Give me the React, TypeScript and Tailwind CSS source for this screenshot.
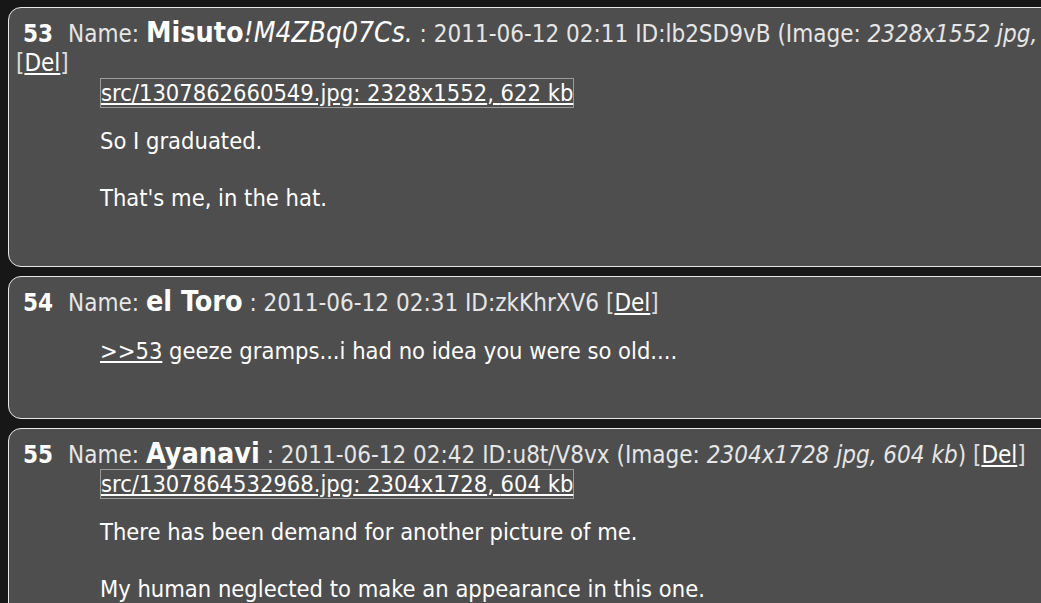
const posts = [
  {
    num: 53,
    name: "Misuto",
    trip: "!M4ZBq07Cs.",
    date: "2011-06-12 02:11",
    id: "lb2SD9vB",
    image: { file: "src/1307862660549.jpg", dims: "2328x1552", size: "622 kb" },
    delOwnLine: true,
    body: ["So I graduated.", "That's me, in the hat."],
  },
  {
    num: 54,
    name: "el Toro",
    date: "2011-06-12 02:31",
    id: "zkKhrXV6",
    quote: ">>53",
    body: ["geeze gramps...i had no idea you were so old...."],
  },
  {
    num: 55,
    name: "Ayanavi",
    date: "2011-06-12 02:42",
    id: "u8t/V8vx",
    image: { file: "src/1307864532968.jpg", dims: "2304x1728", size: "604 kb" },
    body: ["There has been demand for another picture of me.", "My human neglected to make an appearance in this one."],
  },
];

type Post = (typeof posts)[number] & { trip?: string; quote?: string; delOwnLine?: boolean };

const Del = () => (
  <span className="text-[#dcdcdc]">
    [<a href="#" className="text-white underline">Del</a>]
  </span>
);

const PostCard = ({ post }: { post: Post }) => (
  <div className="w-[1160px] shrink-0 rounded-l-[13px] border border-[#e8e8e8] bg-[#4e4e4e] pt-[10px] pr-2 pl-[7px] pb-[53px] text-[23.5px] text-[#e6e6e6]">
    <div className="h-[30px] whitespace-nowrap text-[24px] leading-[30px]">
      <span className="ml-[7px] font-bold text-white">{post.num}</span>
      <span className="ml-[15px]">Name: </span>
      <span className="text-[28.5px] font-bold text-white">{post.name}</span>
      {post.trip && <span className="text-[28px] italic text-white">{post.trip}</span>}
      <span> : {post.date} ID:{post.id}</span>
      {post.image && (
        <span>
          {" "}(Image: <i>{post.image.dims} jpg, {post.image.size}</i>)
        </span>
      )}
      {!post.delOwnLine && (
        <>
          {" "}
          <Del />
        </>
      )}
    </div>
    {post.delOwnLine && (
      <div className="h-[30px] text-[24px] leading-[30px]">
        <Del />
      </div>
    )}
    {post.image && (
      <div className="ml-[84px] h-[30px] leading-[28px]">
        <a href="#" className="inline-block border border-[#9a9a9a] text-white underline">
          {post.image.file}: {post.image.dims}, {post.image.size}
        </a>
      </div>
    )}
    <div className={`ml-[84px] leading-[28.5px] text-white ${post.image ? "mt-[19px]" : "mt-[20px]"}`}>
      {post.body.map((line, i) => (
        <div key={i} className={i > 0 ? "mt-[28.5px]" : ""}>
          {i === 0 && post.quote && (
            <>
              <a href="#" className="underline">{post.quote}</a>{" "}
            </>
          )}
          {line}
        </div>
      ))}
    </div>
  </div>
);

export default function App() {
  return (
    <div className="h-screen w-full overflow-hidden bg-[#171717] pt-[7px] pl-2 font-[family-name:'DejaVu_Sans_Condensed','DejaVu_Sans',sans-serif]">
      <div className="flex flex-col gap-[9px]">
        {posts.map((p) => (
          <PostCard key={p.num} post={p as Post} />
        ))}
      </div>
    </div>
  );
}
